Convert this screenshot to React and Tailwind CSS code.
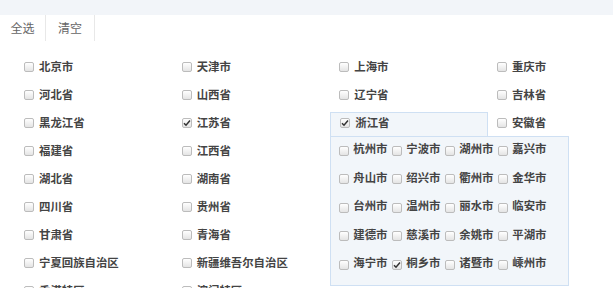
import React from 'react';

const provinces = [
  ['北京市', '天津市', '上海市', '重庆市'],
  ['河北省', '山西省', '辽宁省', '吉林省'],
  ['黑龙江省', '江苏省', '浙江省', '安徽省'],
  ['福建省', '江西省', '', ''],
  ['湖北省', '湖南省', '', ''],
  ['四川省', '贵州省', '', ''],
  ['甘肃省', '青海省', '', ''],
  ['宁夏回族自治区', '新疆维吾尔自治区', '', ''],
  ['香港特区', '澳门特区', '', ''],
];

const checkedSet = new Set(['江苏省', '浙江省']);

const cities = [
  '杭州市', '宁波市', '湖州市', '嘉兴市',
  '舟山市', '绍兴市', '衢州市', '金华市',
  '台州市', '温州市', '丽水市', '临安市',
  '建德市', '慈溪市', '余姚市', '平湖市',
  '海宁市', '桐乡市', '诸暨市', '嵊州市',
];

const Box = ({ checked, className = '' }) => (
  <span
    className={`flex h-[10px] w-[10px] shrink-0 items-center justify-center rounded-[2px] border border-[#bcbcbc] bg-gradient-to-b from-white to-[#e4e4e4] ${className}`}
  >
    {checked && (
      <svg width="8" height="8" viewBox="0 0 8 8">
        <path d="M1 4.2 L3 6.2 L7 1.5" fill="none" stroke="#333" strokeWidth="1.5" />
      </svg>
    )}
  </span>
);

const Item = ({ name }) => {
  if (!name) return <div className="h-[24px]" />;
  const checked = checkedSet.has(name);
  const open = name === '浙江省';
  return (
    <div className="relative">
      <div
        className={`flex h-[24px] items-center gap-[5px] pl-[9px] pb-[3px] ${
          open ? 'border border-b-0 border-[#cfe0f3] bg-[#f2f6fa] pl-[8px]' : ''
        }`}
      >
        <Box checked={checked} />
        <span className="whitespace-nowrap">{name}</span>
      </div>
      {open && (
        <div className="absolute left-0 top-[24px] z-10 w-[239px] border border-[#cfe0f3] bg-[#f2f6fa] pl-[8px] pt-[2px] pb-[12px]">
          <div className="grid grid-cols-[repeat(4,53px)] gap-y-[8.4px]">
            {cities.map((c) => (
              <div key={c} className="flex h-[20px] items-center gap-[4px]">
                <Box checked={c === '桐乡市'} className="mt-[4px]" />
                <span className="whitespace-nowrap">{c}</span>
              </div>
            ))}
          </div>
        </div>
      )}
    </div>
  );
};

export default function App() {
  return (
    <div
      className="h-[288px] w-[613px] overflow-hidden bg-white text-[11.4px] font-bold text-[#444]"
      style={{ fontFamily: '"Noto Sans CJK SC", "Noto Sans", sans-serif' }}
    >
      <div className="h-[15px] bg-[#f2f5f9]" />
      <div className="flex h-[26px] font-normal text-[#666] text-[12px]">
        <div className="flex w-[46px] items-center justify-center border-r border-[#e8e8e8]">全选</div>
        <div className="flex w-[49px] items-center justify-center border-r border-[#e8e8e8]">清空</div>
      </div>
      <div className="ml-[15px] mt-[15px] grid w-max grid-cols-[repeat(4,157.67px)] gap-y-[4px]">
        {provinces.flat().map((p, i) => (
          <Item key={i} name={p} />
        ))}
      </div>
    </div>
  );
}
